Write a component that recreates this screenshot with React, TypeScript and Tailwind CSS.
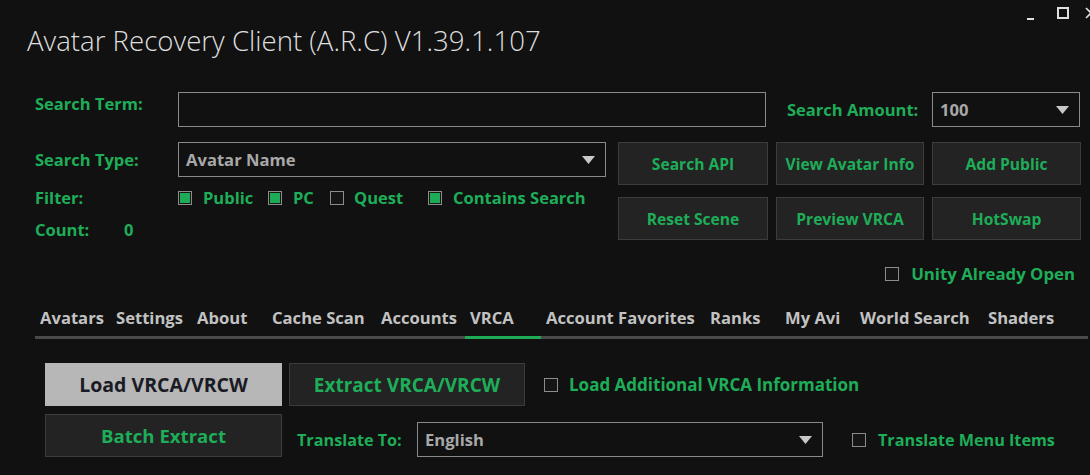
import React from 'react';

const font = { fontFamily: '"Open Sans", "Noto Sans", sans-serif' };

const Check: React.FC<{ checked?: boolean }> = ({ checked }) => (
  <span className="flex h-[14px] w-[14px] shrink-0 items-center justify-center border border-[#8c8c8c] bg-[#151515]">
    {checked && <span className="h-[10px] w-[10px] bg-[#1dab55]" />}
  </span>
);

const Arrow = () => (
  <svg width="13" height="8" viewBox="0 0 13 8" className="shrink-0">
    <path d="M0 0h13L6.5 8z" fill="#c8c8c8" />
  </svg>
);

const Combo: React.FC<{ value: string; className: string }> = ({ value, className }) => (
  <div className={`flex h-[35px] items-center justify-between border border-[#8a8a8a] pl-[7px] pr-[10px] ${className}`}>
    <span className="text-[16.6px] font-bold leading-[20px] text-[#a8a8a8]">{value}</span>
    <Arrow />
  </div>
);

const Btn: React.FC<{ label: string; className?: string }> = ({ label, className = 'text-[15.6px]' }) => (
  <button className={`flex h-[43px] items-center justify-center border border-[#3c3c3c] bg-[#232323] font-bold text-[#1ead58] ${className}`}>
    {label}
  </button>
);

const tabs: [string, number][] = [
  ['Avatars', 76],
  ['Settings', 81],
  ['About', 75],
  ['Cache Scan', 109],
  ['Accounts', 89],
  ['VRCA', 76],
  ['Account Favorites', 164],
  ['Ranks', 75],
  ['My Avi', 75],
  ['World Search', 128],
  ['Shaders', 90],
];

export default function App() {
  return (
    <div className="h-[475px] w-[1090px] overflow-hidden bg-[#111111] text-[#1ead58]" style={font}>
      {/* title bar */}
      <div className="flex h-[80px] items-start">
        <h1 className="flex-1 pl-[27px] pt-[22px] text-[27.6px] font-light leading-[36px] whitespace-nowrap text-[#dedede]">
          Avatar Recovery Client (A.R.C) V1.39.1.107
        </h1>
        {/* window controls; the close cross runs past the right edge */}
        <div className="flex w-[63px] shrink-0 items-start pt-[7px]">
          <span className="mt-[11px] h-[2px] w-[7px] shrink-0 bg-[#e0e0e0]" />
          <span className="ml-[23px] h-[12px] w-[12px] shrink-0 border-2 border-[#e0e0e0]" />
          <svg width="12" height="12" viewBox="0 0 12 12" className="ml-[16px] shrink-0">
            <path d="M1 1l10 10M11 1L1 11" stroke="#e0e0e0" strokeWidth="1.6" />
          </svg>
        </div>
      </div>

      <div className="pl-[35px] pt-[12px] text-[16.5px] leading-[20px]">
        {/* search term row */}
        <div className="flex h-[35px] items-start">
          <span className="w-[143px] pt-[2px] font-bold">Search Term:</span>
          <div className="h-[35px] w-[588px] border border-[#8a8a8a]" />
          <span className="ml-[21px] w-[145px] self-center font-bold">Search Amount:</span>
          <Combo value="100" className="w-[148px]" />
        </div>

        <div className="mt-[15px] flex items-start">
          {/* left column */}
          <div className="w-[583px]">
            <div className="flex h-[35px] items-center">
              <span className="w-[143px] font-bold">Search Type:</span>
              <Combo value="Avatar Name" className="w-[428px]" />
            </div>
            <div className="mt-[11px] flex h-[20px] items-center font-bold">
              <span className="w-[143px]">Filter:</span>
              <Check checked />
              <span className="ml-[11px] w-[65px]">Public</span>
              <Check checked />
              <span className="ml-[11px] w-[37px]">PC</span>
              <Check />
              <span className="ml-[10px] w-[74px]">Quest</span>
              <Check checked />
              <span className="ml-[11px] whitespace-nowrap">Contains Search</span>
            </div>
            <div className="mt-[12px] flex h-[20px] items-center font-bold">
              <span className="w-[89px]">Count:</span>
              <span>0</span>
            </div>
          </div>

          {/* action buttons */}
          <div className="grid grid-cols-[150px_148px_149px] content-start gap-x-[8px] gap-y-[12px]">
            <Btn label="Search API" />
            <Btn label="View Avatar Info" />
            <Btn label="Add Public" />
            <Btn label="Reset Scene" />
            <Btn label="Preview VRCA" />
            <Btn label="HotSwap" />
          </div>
        </div>

        <div className="mt-[24px] flex h-[20px] items-center justify-end gap-[12px] pr-[15px] font-bold">
          <Check />
          <span className="text-[16.8px]">Unity Already Open</span>
        </div>

        {/* tab strip */}
        <div className="mt-[24px] mr-[2px] flex border-b-[3px] border-[#4a4a4a]">
          {tabs.map(([name, w]) => (
            <div
              key={name}
              style={{ width: w }}
              className={`-mb-[3px] shrink-0 pb-[8px] pl-[5px] text-[16.6px] font-bold whitespace-nowrap text-[#c2c2c2] ${
                name === 'VRCA' ? 'border-b-[3px] border-[#1dab55]' : ''
              }`}
            >
              {name}
            </div>
          ))}
        </div>

        {/* VRCA tab content */}
        <div className="mt-[24px] flex items-center pl-[10px]">
          <button className="flex h-[43px] w-[237px] items-center justify-center bg-[#b7b7b7] text-[19.5px] font-bold text-[#1b1b26]">
            Load VRCA/VRCW
          </button>
          <Btn label="Extract VRCA/VRCW" className="ml-[7px] w-[236px] text-[19px]" />
          <span className="ml-[19px]"><Check /></span>
          <span className="ml-[11px] font-bold text-[17px]">Load Additional VRCA Information</span>
        </div>
        <div className="mt-[8px] flex items-end pl-[10px]">
          <Btn label="Batch Extract" className="w-[237px] text-[18.6px]" />
          <div className="flex h-[35px] items-center">
            <span className="ml-[15px] w-[120px] font-bold text-[16.2px]">Translate To:</span>
            <Combo value="English" className="w-[406px]" />
            <span className="ml-[29px]"><Check /></span>
            <span className="ml-[12px] font-bold text-[16.2px] whitespace-nowrap">Translate Menu Items</span>
          </div>
        </div>
      </div>
    </div>
  );
}
